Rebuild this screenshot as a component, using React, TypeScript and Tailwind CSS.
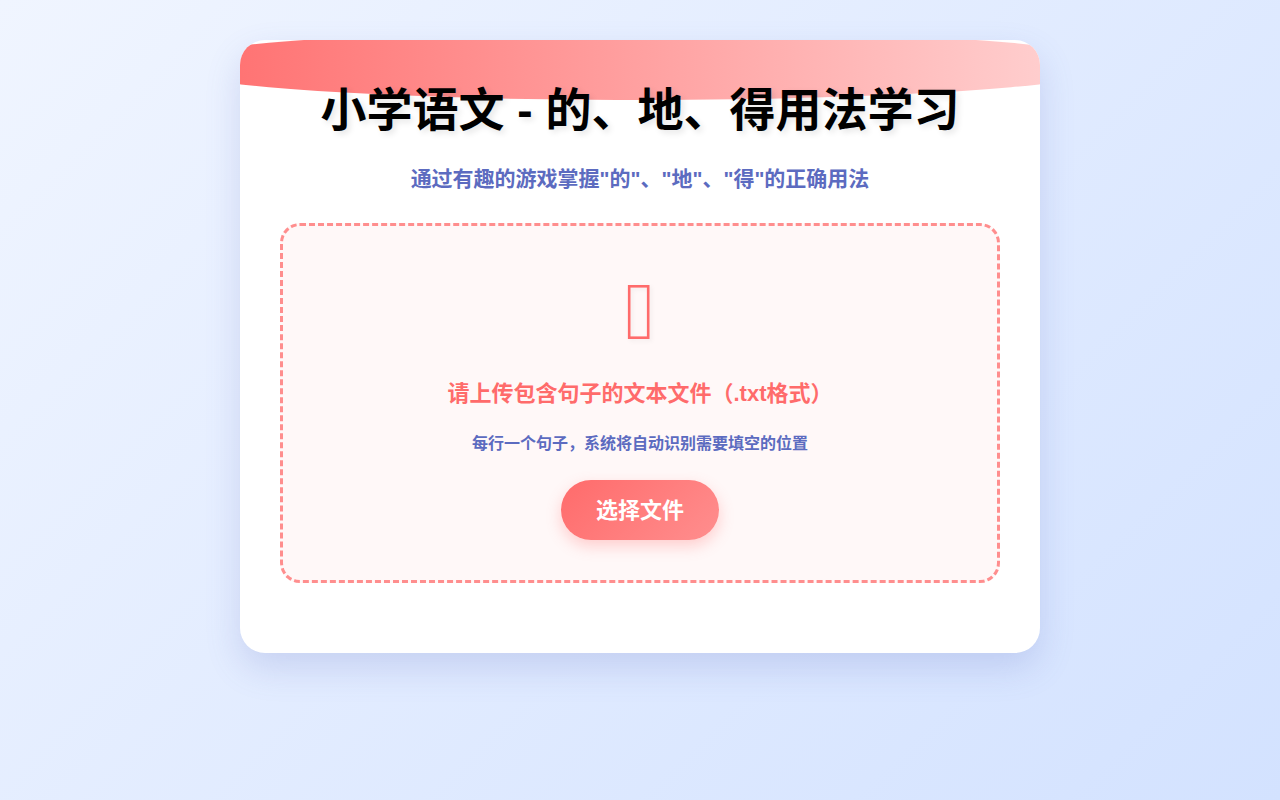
import { useRef, useState } from "react";
import type { ChangeEvent } from "react";

type UploadPanelProps = {
  fileName: string | null;
  onSelect: (file: File) => void;
};

function FileGlyph() {
  return (
    <svg
      aria-hidden="true"
      viewBox="0 0 26 58"
      className="h-[58px] w-[26px] drop-shadow-[2px_2px_2px_rgba(0,0,0,0.05)]"
    >
      <rect
        x="2.2"
        y="3.3"
        width="19"
        height="51.4"
        fill="none"
        stroke="#ff6b6b"
        strokeWidth="2.6"
      />
    </svg>
  );
}

function UploadPanel({ fileName, onSelect }: UploadPanelProps) {
  const inputRef = useRef<HTMLInputElement>(null);

  function handleChange(event: ChangeEvent<HTMLInputElement>) {
    const file = event.target.files?.[0];
    if (file) {
      onSelect(file);
    }
  }

  return (
    <section className="mt-7 flex flex-col items-center rounded-[20px] border-[3px] border-dashed border-[#ff8e8e] bg-[#fff8f8] px-10 pt-[57px] pb-10 text-center">
      <FileGlyph />

      <label
        htmlFor="sentence-file"
        className="mt-[37px] text-[22px] leading-8 font-bold text-[#ff6b6b]"
      >
        请上传包含句子的文本文件（.txt格式）
      </label>
      <p className="mt-5 text-base leading-7 font-bold text-[#5c6bc0]">
        {fileName ?? "每行一个句子，系统将自动识别需要填空的位置"}
      </p>

      <input
        ref={inputRef}
        id="sentence-file"
        type="file"
        accept=".txt"
        className="hidden"
        onChange={handleChange}
      />
      <button
        type="button"
        onClick={() => inputRef.current?.click()}
        className="mt-[22px] h-[60px] cursor-pointer rounded-full bg-[linear-gradient(135deg,#ff6b6b,#ff8e8e)] px-[35px] text-[22px] font-bold text-white shadow-[0_6px_15px_rgba(255,107,107,0.3)]"
      >
        选择文件
      </button>
    </section>
  );
}

export default function App() {
  const [fileName, setFileName] = useState<string | null>(null);

  return (
    <div className="min-h-screen bg-[linear-gradient(135deg,#f0f5ff,#d3e2ff)] px-5 py-10 font-['Liberation_Sans','Noto_Sans_CJK_SC',sans-serif]">
      <main className="relative mx-auto max-w-[800px] overflow-hidden rounded-[25px] bg-white px-10 pt-10 pb-[70px] shadow-[0_15px_35px_rgba(92,107,192,0.2)]">
        <div className="absolute inset-x-[-10%] top-[-10px] h-[70px] rounded-[50%] bg-[linear-gradient(90deg,#ff6b6b,#ffd6d6)]" />

        <header className="relative text-center">
          <h1 className="text-[46px] leading-[60px] font-bold text-black [text-shadow:3px_3px_6px_rgba(0,0,0,0.1)]">
            小学语文 - 的、地、得用法学习
          </h1>
          <p className="mt-[23px] text-[21px] leading-8 font-bold text-[#5c6bc0]">
            通过有趣的游戏掌握"的"、"地"、"得"的正确用法
          </p>
        </header>

        <UploadPanel
          fileName={fileName}
          onSelect={(file) => setFileName(file.name)}
        />
      </main>
    </div>
  );
}
